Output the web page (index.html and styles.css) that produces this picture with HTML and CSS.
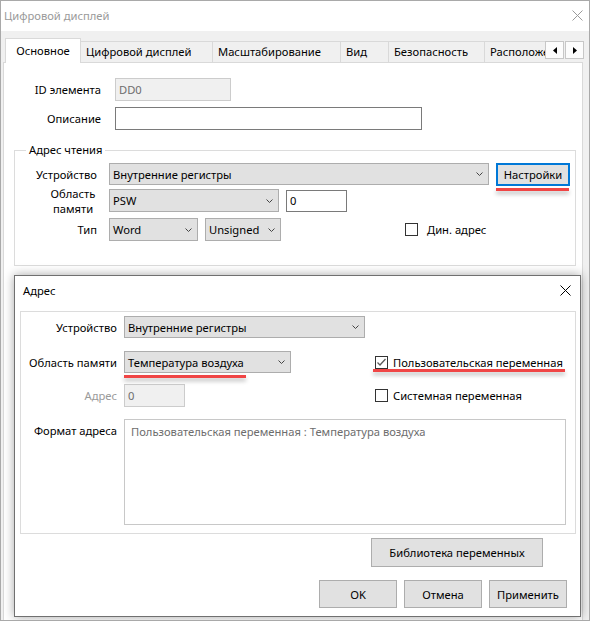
FILE: index.html
```html
<!DOCTYPE html>
<html>
<head>
<meta charset="utf-8">
<title>Цифровой дисплей</title>
<link rel="stylesheet" href="styles.css">
</head>
<body>
<div class="window">
  <div class="titlebar">
    <span class="title">Цифровой дисплей</span>
    <svg class="xicon xicon-inactive" width="11" height="11" viewBox="0 0 11 11"><path d="M0.5 0.5L10.5 10.5M10.5 0.5L0.5 10.5"/></svg>
  </div>
  <div class="wbody">
    <div class="tabs">
      <div class="tablist">
        <div class="tab tab-active t1">Основное</div>
        <div class="tab t2">Цифровой дисплей</div>
        <div class="tab t3">Масштабирование</div>
        <div class="tab t4">Вид</div>
        <div class="tab t5">Безопасность</div>
        <div class="tab t6">Расположение</div>
      </div>
      <div class="tabscroll">
        <div class="sbtn"><svg width="4" height="7" viewBox="0 0 4 7"><path d="M4 0L0 3.5L4 7Z"/></svg></div>
        <div class="sbtn"><svg width="4" height="7" viewBox="0 0 4 7"><path d="M0 0L4 3.5L0 7Z"/></svg></div>
      </div>
    </div>
    <div class="panel">
      <div class="frow r-id">
        <span class="lbl lbl-main">ID элемента</span>
        <div class="input input-disabled in-id">DD0</div>
      </div>
      <div class="frow r-desc">
        <span class="lbl lbl-main">Описание</span>
        <div class="input in-desc"></div>
      </div>
      <div class="group1">
        <div class="legend">Адрес чтения</div>
        <div class="frow g1-r1">
          <span class="lbl lbl-g1">Устройство</span>
          <div class="select sel-dev1"><span>Внутренние регистры</span><svg class="chev" width="7" height="4" viewBox="0 0 7 4"><path d="M0.5 0.5L3.5 3.5L6.5 0.5"/></svg></div>
          <div class="btn btn-focus btn-settings">Настройки</div>
        </div>
        <div class="frow g1-r2">
          <div class="lbl lbl-g1"><span class="lbl-two">Область памяти</span></div>
          <div class="select sel-psw"><span>PSW</span><svg class="chev" width="7" height="4" viewBox="0 0 7 4"><path d="M0.5 0.5L3.5 3.5L6.5 0.5"/></svg></div>
          <div class="input in-addr">0</div>
        </div>
        <div class="frow g1-r3">
          <span class="lbl lbl-g1">Тип</span>
          <div class="select sel-word"><span>Word</span><svg class="chev" width="7" height="4" viewBox="0 0 7 4"><path d="M0.5 0.5L3.5 3.5L6.5 0.5"/></svg></div>
          <div class="select sel-uns"><span>Unsigned</span><svg class="chev" width="7" height="4" viewBox="0 0 7 4"><path d="M0.5 0.5L3.5 3.5L6.5 0.5"/></svg></div>
          <div class="check check-dyn"><span class="cbox"></span><span class="ctext-wide">Дин. адрес</span></div>
        </div>
      </div>
    </div>
  </div>

  <div class="dialog">
    <div class="dtitle">
      <span>Адрес</span>
      <svg class="xicon" width="11" height="11" viewBox="0 0 11 11"><path d="M0.5 0.5L10.5 10.5M10.5 0.5L0.5 10.5"/></svg>
    </div>
    <div class="dgroup">
      <div class="frow d-r1">
        <span class="lbl lbl-d">Устройство</span>
        <div class="select sel-dev2"><span>Внутренние регистры</span><svg class="chev" width="7" height="4" viewBox="0 0 7 4"><path d="M0.5 0.5L3.5 3.5L6.5 0.5"/></svg></div>
      </div>
      <div class="frow d-r2">
        <span class="lbl lbl-d">Область памяти</span>
        <div class="select sel-mem"><span>Температура воздуха</span><svg class="chev" width="7" height="4" viewBox="0 0 7 4"><path d="M0.5 0.5L3.5 3.5L6.5 0.5"/></svg></div>
        <div class="check check-user"><span class="cbox"><svg width="11" height="11" viewBox="0 0 11 11"><path d="M1.5 5.5L4 8L9.5 2"/></svg></span><span class="ctext">Пользовательская переменная</span></div>
      </div>
      <div class="frow d-r3">
        <span class="lbl lbl-d lbl-gray">Адрес</span>
        <div class="input input-disabled in-daddr">0</div>
        <div class="check check-sys"><span class="cbox"></span><span class="ctext">Системная переменная</span></div>
      </div>
      <div class="frow d-r4">
        <span class="lbl lbl-d lbl-top">Формат адреса</span>
        <div class="textarea">Пользовательская переменная : Температура воздуха</div>
      </div>
    </div>
    <div class="brow brow-lib">
      <div class="btn btn-lib">Библиотека переменных</div>
    </div>
    <div class="brow brow-main">
      <div class="btn btn-main">OK</div>
      <div class="btn btn-main">Отмена</div>
      <div class="btn btn-main">Применить</div>
    </div>
  </div>

  <div class="mark mark-settings"></div>
  <div class="mark mark-mem"></div>
  <div class="mark mark-user"></div>
</div>
</body>
</html>
```

FILE: styles.css
```css
* { box-sizing: border-box; }
html, body { margin: 0; padding: 0; }
body {
  width: 593px;
  height: 622px;
  overflow: hidden;
  background: #ffffff;
  font-family: "Noto Sans", "Open Sans", "DejaVu Sans", sans-serif;
  font-size: 11.2px;
  color: #000;
}
.window {
  position: relative;
  width: 590px;
  height: 621px;
  border: 1px solid #a9a9a9;
  background: #f0f0f0;
  overflow: hidden;
}
.titlebar {
  height: 30px;
  background: #fff;
  display: flex;
  align-items: center;
  justify-content: space-between;
  padding: 0 6px 2px 3px;
}
.title { color: #9a9a9a; }
.xicon path { stroke: #000; stroke-width: 1; fill: none; }
.xicon-inactive path { stroke: #9a9a9a; }

.wbody { padding-top: 7px; }
.tabs {
  display: flex;
  align-items: flex-end;
  height: 25px;
  margin: 0 0 -1px 4px;
  position: relative;
  z-index: 2;
}
.tablist {
  display: flex;
  align-items: flex-end;
  width: 540px;
  overflow: hidden;
  height: 25px;
}
.tab {
  flex: none;
  height: 21px;
  margin-bottom: 1px;
  border-top: 1px solid #d9d9d9;
  border-right: 1px solid #d9d9d9;
  background: #f0f0f0;
  white-space: nowrap;
  line-height: 19px;
  padding-left: 5px;
  overflow: hidden;
}
.tab-active {
  background: #fff;
  border-left: 1px solid #d9d9d9;
  line-height: 23px;
  text-align: center;
  padding-left: 0;
  margin-bottom: 0;
  height: 25px;
}
.t1 { width: 76px; }
.t2 { width: 132px; }
.t3 { width: 128px; }
.t4 { width: 48px; }
.t5 { width: 96px; }
.t6 { width: 80px; border-right: none; }
.tabscroll {
  display: flex;
  margin-bottom: 4px;
}
.sbtn {
  width: 19px;
  height: 18px;
  border: 1px solid #c7c7c7;
  background: #fcfcfc;
  display: flex;
  align-items: center;
  justify-content: center;
}
.sbtn + .sbtn { margin-left: 1px; }
.sbtn path { fill: #000; }

.panel {
  margin-left: 2px;
  width: 580px;
  height: 560px;
  background: #fff;
  border: 1px solid #d9d9d9;
  position: relative;
  z-index: 1;
}
.frow { display: flex; align-items: center; }
.lbl { flex: none; white-space: nowrap; text-align: right; }
.lbl-main { width: 97px; margin-right: 14px; }
.r-id { margin-top: 15px; height: 23px; }
.r-desc { margin-top: 6px; height: 23px; }

.input {
  flex: none;
  height: 23px;
  border: 1px solid #7a7a7a;
  background: #fff;
  padding-left: 3px;
  line-height: 21px;
  white-space: nowrap;
}
.input-disabled {
  background: #f0f0f0;
  border-color: #cccccc;
  color: #6d6d6d;
}
.in-id { width: 116px; }
.in-desc { width: 307px; }
.in-addr { width: 61px; height: 22px; line-height: 20px; }

.group1 {
  margin: 20px 0 0 10px;
  width: 562px;
  height: 116px;
  border: 1px solid #dcdcdc;
}
.legend {
  display: table;
  margin: -9px 0 0 11px;
  padding: 0 3px;
  background: #fff;
  line-height: 16px;
}
.lbl-g1 { width: 82px; margin-right: 12px; }
.g1-r1 { margin-top: 5px; height: 22px; }
.g1-r2 { margin-top: 4px; height: 23px; }
.g1-r3 { margin-top: 6px; height: 23px; }
.lbl-two {
  display: block;
  width: 48px;
  margin-left: auto;
  white-space: normal;
  text-align: center;
  line-height: 15px;
}

.select {
  flex: none;
  height: 22px;
  background: #e1e1e1;
  border: 1px solid #adadad;
  display: flex;
  align-items: center;
  justify-content: space-between;
  padding: 0 5px 0 3px;
  white-space: nowrap;
}
.chev path { stroke: #444; stroke-width: 1; fill: none; }
.sel-dev1 { width: 380px; }
.sel-psw { width: 170px; margin-right: 7px; height: 23px; }
.sel-word { width: 89px; margin-right: 7px; height: 23px; }
.sel-uns { width: 76px; height: 23px; }

.btn {
  flex: none;
  background: #e1e1e1;
  border: 1px solid #adadad;
  display: flex;
  align-items: center;
  justify-content: center;
  white-space: nowrap;
}
.btn-focus { border: 2px solid #0078d7; }
.btn-settings { width: 74px; height: 23px; margin-left: 7px; }

.check { display: flex; align-items: center; white-space: nowrap; }
.cbox {
  flex: none;
  width: 13px;
  height: 13px;
  border: 1px solid #333;
  background: #fff;
  display: flex;
  align-items: center;
  justify-content: center;
}
.cbox path { stroke: #5a5a5a; stroke-width: 1.3; fill: none; }
.ctext { margin-left: 5px; }
.ctext-wide { margin-left: 9px; }
.check-dyn { margin-left: 124px; }

.dialog {
  position: absolute;
  left: 13px;
  top: 274px;
  width: 567px;
  height: 342px;
  background: #fff;
  border: 1px solid #707070;
  box-shadow: 0 0 10px rgba(0, 0, 0, 0.35);
  z-index: 5;
}
.dtitle {
  height: 28px;
  display: flex;
  align-items: center;
  justify-content: space-between;
  padding: 0 9px 0 8px;
}
.dgroup {
  margin: 7px 0 0 5px;
  width: 556px;
  height: 223px;
  border: 1px solid #dcdcdc;
  padding-top: 4px;
}
.lbl-d { width: 96px; margin-right: 7px; }
.lbl-gray { color: #9a9a9a; }
.lbl-top { align-self: flex-start; padding-top: 4px; line-height: 16px; }
.d-r1 { height: 22px; }
.d-r2 { margin-top: 13px; height: 22px; }
.d-r3 { margin-top: 11px; height: 23px; }
.d-r4 { margin-top: 12px; align-items: flex-start; }
.sel-dev2 { width: 241px; }
.sel-mem { width: 167px; }
.check-user { margin-left: 84px; }
.in-daddr { width: 61px; }
.check-sys { margin-left: 190px; }
.textarea {
  flex: none;
  width: 442px;
  height: 106px;
  border: 1px solid #c8c8c8;
  background: #fff;
  color: #6d6d6d;
  padding: 4px 0 0 6px;
  line-height: 16px;
  white-space: nowrap;
}
.brow { display: flex; justify-content: flex-end; }
.brow-lib { margin-top: 4px; padding-right: 37px; }
.btn-lib { width: 172px; height: 29px; }
.brow-main { margin-top: 13px; padding-right: 13px; gap: 7px; }
.btn-main { width: 78px; height: 28px; }

.mark {
  position: absolute;
  height: 3px;
  background: #f04545;
  box-shadow: 0 3px 4px rgba(0, 0, 0, 0.28);
  z-index: 10;
}
.mark-settings { left: 495px; top: 187px; width: 73px; }
.mark-mem { left: 123px; top: 374px; width: 122px; }
.mark-user { left: 372px; top: 368px; width: 192px; }
```
